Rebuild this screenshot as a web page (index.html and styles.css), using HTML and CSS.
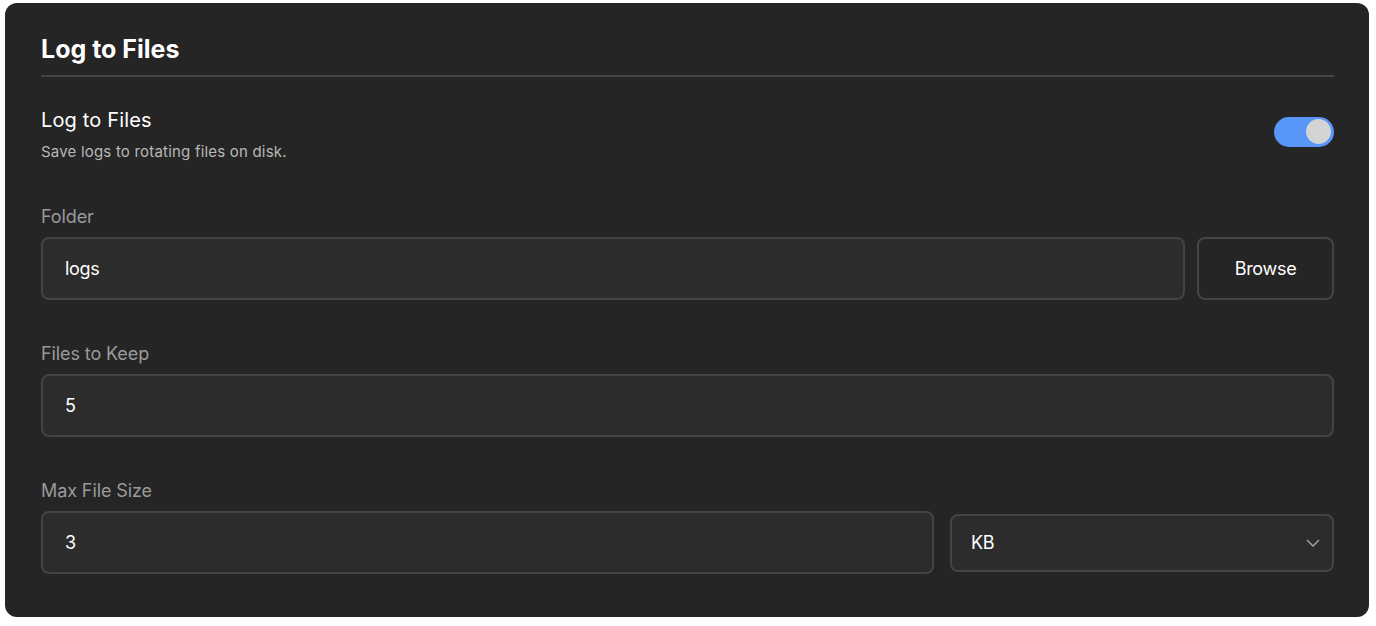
FILE: index.html
```html
<!DOCTYPE html>
<html>
<head>
<meta charset="utf-8">
<link rel="stylesheet" href="styles.css">
</head>
<body>
<section class="panel">
  <h2 class="title">Log to Files</h2>
  <div class="setting">
    <div class="setting-text">
      <div class="setting-name">Log to Files</div>
      <div class="setting-desc">Save logs to rotating files on disk.</div>
    </div>
    <div class="toggle on"><span class="knob"></span></div>
  </div>

  <div class="field">
    <div class="label">Folder</div>
    <div class="row row-folder">
      <div class="input">logs</div>
      <button class="btn">Browse</button>
    </div>
  </div>

  <div class="field">
    <div class="label">Files to Keep</div>
    <div class="row">
      <div class="input">5</div>
    </div>
  </div>

  <div class="field">
    <div class="label">Max File Size</div>
    <div class="row row-size">
      <div class="input">3</div>
      <div class="select">
        <span>KB</span>
        <svg class="chev" width="14" height="8" viewBox="0 0 14 8"><path d="M1 1 L7 7 L13 1" fill="none" stroke="#9a9a9a" stroke-width="1.6"/></svg>
      </div>
    </div>
  </div>
</section>
</body>
</html>
```
FILE: styles.css
```css
* { box-sizing: border-box; }
html, body { margin: 0; padding: 0; background: #ffffff; }
body {
  padding: 3px 7px 9px 5px;
  font-family: Inter, "Noto Sans", sans-serif;
  color: #ffffff;
}
.panel {
  background: #252525;
  border-radius: 12px;
  padding: 30px 35px 44px 36px;
  height: 614px;
}
.title {
  margin: 0;
  font-size: 25px;
  font-weight: 700;
  line-height: 32px;
  letter-spacing: 0;
  padding-bottom: 10px;
  border-bottom: 2px solid #444444;
}
.setting {
  display: flex;
  justify-content: space-between;
  align-items: flex-start;
  margin-top: 30px;
}
.setting-name {
  font-size: 20px;
  line-height: 26px;
  letter-spacing: 0.15px;
}
.setting-desc {
  margin-top: 9px;
  font-size: 15px;
  line-height: 19px;
  color: #b8b8b8;
  letter-spacing: 0.2px;
}
.toggle {
  width: 60px;
  height: 30px;
  border-radius: 15px;
  background: #5896f8;
  position: relative;
  margin-top: 10px;
}
.knob {
  position: absolute;
  right: 3px;
  top: 2px;
  width: 25px;
  height: 25px;
  border-radius: 50%;
  background: #d4d4d4;
}
.field { margin-top: 42px; }
.setting + .field { margin-top: 44px; }
.label {
  font-size: 18px;
  line-height: 24px;
  color: #9a9a9a;
  letter-spacing: -0.1px;
  margin-bottom: 8px;
}
.row {
  display: flex;
  align-items: center;
}
.row-folder { gap: 12px; }
.row-size { gap: 16px; }
.input {
  flex: 1;
  height: 63px;
  border: 2px solid #444444;
  border-radius: 8px;
  background: #2c2c2c;
  padding: 0 22px;
  display: flex;
  align-items: center;
  font-size: 18px;
  letter-spacing: -0.3px;
}
.btn {
  width: 137px;
  height: 63px;
  border: 2px solid #444444;
  border-radius: 8px;
  background: #252525;
  color: #ffffff;
  font-family: inherit;
  font-size: 18px;
  letter-spacing: -0.3px;
}
.row-size .input { flex: 0 0 893px; }
.select {
  flex: 1;
  height: 58px;
  border: 2px solid #444444;
  border-radius: 8px;
  background: #2c2c2c;
  padding: 0 12px 0 19px;
  display: flex;
  align-items: center;
  justify-content: space-between;
  font-size: 18px;
  letter-spacing: -0.3px;
}
.chev { margin-top: 1px; }
```
